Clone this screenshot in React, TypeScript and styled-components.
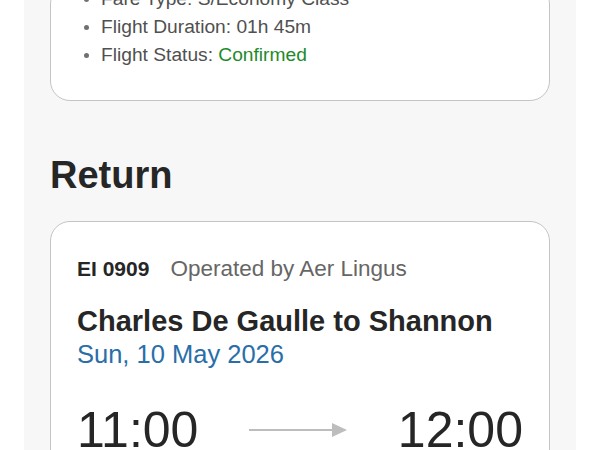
import React from "react";
import styled, { createGlobalStyle } from "styled-components";

const Global = createGlobalStyle`
  html, body { margin: 0; padding: 0; background: #ffffff; }
  body { font-family: "Liberation Sans", Arial, sans-serif; overflow: hidden; }
`;

const Page = styled.div`
  width: 552px;
  margin: 0 auto;
  background: #f7f7f7;
  padding: 0 26px;
  box-sizing: border-box;
  height: 450px;
  overflow: hidden;
`;

const Scroll = styled.div`
  margin-top: -16px;
`;

const Card = styled.section<{ $pad: string }>`
  background: #ffffff;
  border: 1.5px solid #c4c4c4;
  border-radius: 20px;
  box-sizing: border-box;
  padding: ${(p) => p.$pad};
`;

const DetailList = styled.ul`
  margin: 0;
  padding: 0 0 0 24px;
  list-style: disc;
  color: #505050;
  font-size: 19.2px;
  line-height: 28px;
  li::marker { color: #707070; font-size: 17px; }
`;

const Status = styled.span`
  color: #1e8a2a;
`;

const SectionTitle = styled.h2`
  margin: 0;
  padding: 52px 0 24px;
  font-size: 38px;
  line-height: 44px;
  font-weight: 700;
  color: #262626;
`;

const FlightRow = styled.div`
  display: flex;
  align-items: baseline;
  gap: 21px;
  line-height: 26px;
`;

const FlightNo = styled.span`
  font-size: 21px;
  font-weight: 700;
  color: #262626;
`;

const Operator = styled.span`
  font-size: 22.5px;
  color: #666;
`;

const Route = styled.div`
  margin-top: 22px;
  font-size: 29px;
  line-height: 34px;
  font-weight: 700;
  color: #262626;
`;

const DateLine = styled.div`
  font-size: 25.5px;
  line-height: 32px;
  color: #2a6ea8;
`;

const Times = styled.div`
  margin-top: 30px;
  display: flex;
  align-items: center;
  justify-content: space-between;
`;

const Time = styled.span`
  font-size: 50px;
  line-height: 60px;
  color: #262626;
`;

const Arrow = () => (
  <svg width="100" height="16" viewBox="0 0 100 16">
    <line x1="1" y1="8" x2="85" y2="8" stroke="#bdbdbd" strokeWidth="2" />
    <polygon points="84,1 99,8 84,15" fill="#bdbdbd" />
  </svg>
);

export default function App() {
  return (
    <>
      <Global />
      <Page>
        <Scroll>
          <Card $pad="0 26px 31px 26px">
            <DetailList>
              <li>Fare Type: S/Economy Class</li>
              <li>Flight Duration: 01h 45m</li>
              <li>
                Flight Status: <Status>Confirmed</Status>
              </li>
            </DetailList>
          </Card>
          <SectionTitle>Return</SectionTitle>
          <Card $pad="34px 26px 26px 26px">
            <FlightRow>
              <FlightNo>EI 0909</FlightNo>
              <Operator>Operated by Aer Lingus</Operator>
            </FlightRow>
            <Route>Charles De Gaulle to Shannon</Route>
            <DateLine>Sun, 10 May 2026</DateLine>
            <Times>
              <Time>11:00</Time>
              <Arrow />
              <Time>12:00</Time>
            </Times>
          </Card>
        </Scroll>
      </Page>
    </>
  );
}
